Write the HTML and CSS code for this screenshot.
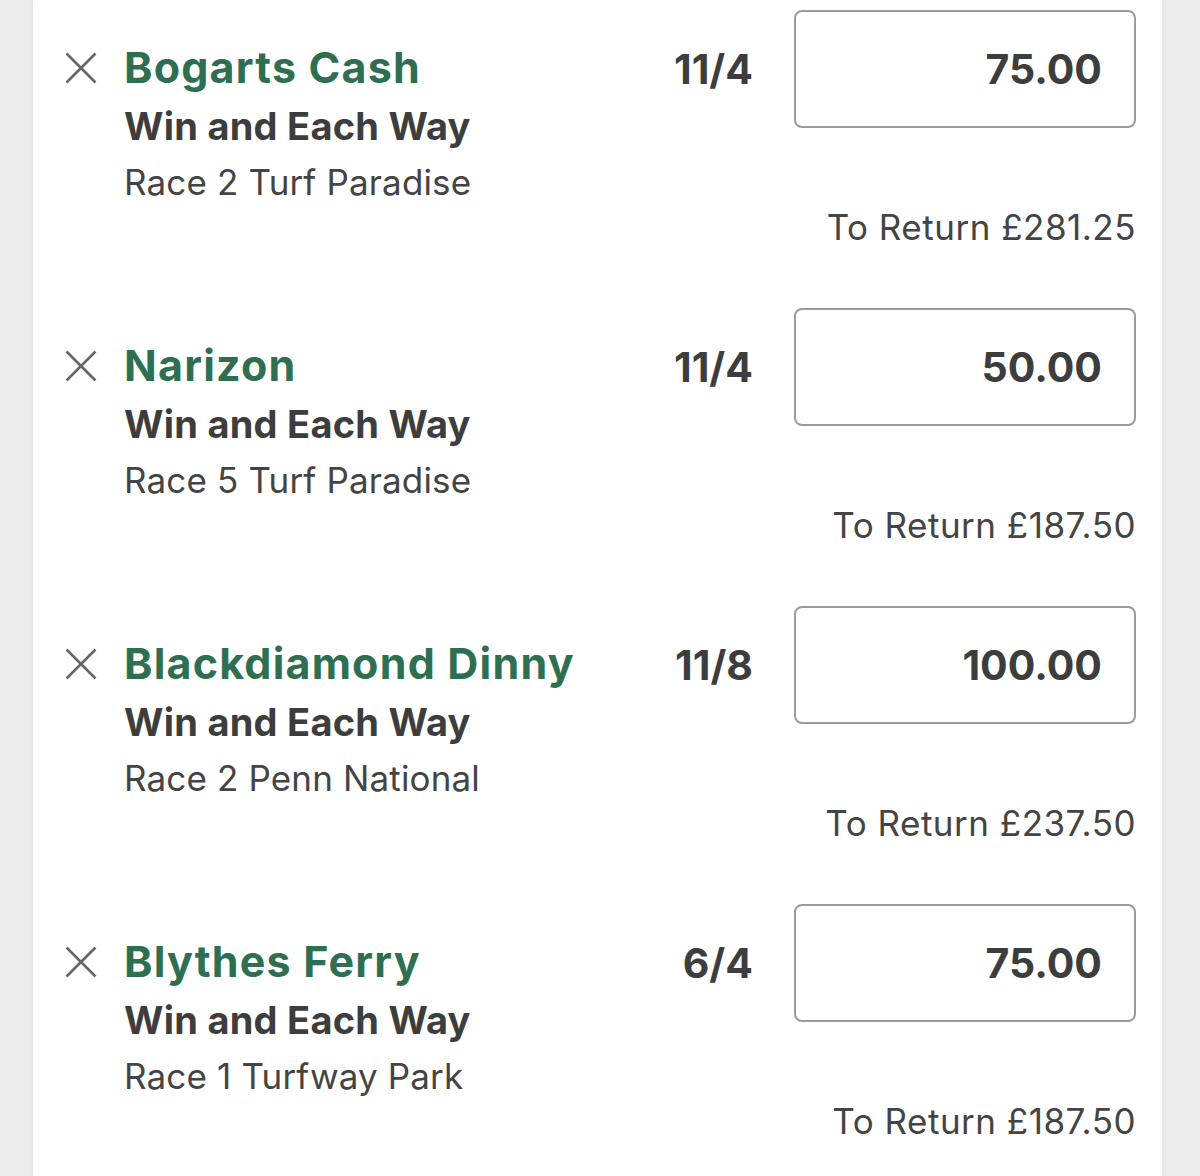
FILE: index.html
```html
<!DOCTYPE html>
<html lang="en">
<head>
    <meta charset="UTF-8">
    <meta name="viewport" content="width=device-width, initial-scale=1.0">
    <title>Bet Slip</title>
    <link rel="stylesheet" href="styles.css">
</head>
<body>
    <div class="slip">
        <div class="bet">
            <button class="remove" aria-label="Remove selection">
                <svg viewBox="0 0 32 32" width="32" height="32"><path d="M1.5 1.5L30.5 30.5M30.5 1.5L1.5 30.5"/></svg>
            </button>
            <div class="info">
                <div class="runner">Bogarts Cash</div>
                <div class="market">Win and Each Way</div>
                <div class="event">Race 2 Turf Paradise</div>
            </div>
            <div class="stake-col">
                <div class="stake-row">
                    <span class="odds">11/4</span>
                    <input class="stake" type="text" value="75.00">
                </div>
                <div class="returns">To Return £281.25</div>
            </div>
        </div>

        <div class="bet">
            <button class="remove" aria-label="Remove selection">
                <svg viewBox="0 0 32 32" width="32" height="32"><path d="M1.5 1.5L30.5 30.5M30.5 1.5L1.5 30.5"/></svg>
            </button>
            <div class="info">
                <div class="runner">Narizon</div>
                <div class="market">Win and Each Way</div>
                <div class="event">Race 5 Turf Paradise</div>
            </div>
            <div class="stake-col">
                <div class="stake-row">
                    <span class="odds">11/4</span>
                    <input class="stake" type="text" value="50.00">
                </div>
                <div class="returns">To Return £187.50</div>
            </div>
        </div>

        <div class="bet">
            <button class="remove" aria-label="Remove selection">
                <svg viewBox="0 0 32 32" width="32" height="32"><path d="M1.5 1.5L30.5 30.5M30.5 1.5L1.5 30.5"/></svg>
            </button>
            <div class="info">
                <div class="runner">Blackdiamond Dinny</div>
                <div class="market">Win and Each Way</div>
                <div class="event">Race 2 Penn National</div>
            </div>
            <div class="stake-col">
                <div class="stake-row">
                    <span class="odds">11/8</span>
                    <input class="stake" type="text" value="100.00">
                </div>
                <div class="returns">To Return £237.50</div>
            </div>
        </div>

        <div class="bet">
            <button class="remove" aria-label="Remove selection">
                <svg viewBox="0 0 32 32" width="32" height="32"><path d="M1.5 1.5L30.5 30.5M30.5 1.5L1.5 30.5"/></svg>
            </button>
            <div class="info">
                <div class="runner">Blythes Ferry</div>
                <div class="market">Win and Each Way</div>
                <div class="event">Race 1 Turfway Park</div>
            </div>
            <div class="stake-col">
                <div class="stake-row">
                    <span class="odds">6/4</span>
                    <input class="stake" type="text" value="75.00">
                </div>
                <div class="returns">To Return £187.50</div>
            </div>
        </div>
    </div>
</body>
</html>
```

FILE: styles.css
```css
body {
    font-family: Inter, "Liberation Sans", Arial, sans-serif;
    background-color: #ececec;
    margin: 0;
    padding: 0;
}
.slip {
    margin: 0 38px 0 33px;
    min-height: 1176px;
    background: #fff;
    box-shadow: 0 0 5px rgba(0,0,0,0.06);
}
.bet {
    display: flex;
    align-items: flex-start;
    padding: 10px 26px 51px 32px;
}
.remove {
    flex: none;
    width: 32px;
    height: 32px;
    margin-top: 42px;
    padding: 0;
    border: none;
    background: none;
    cursor: pointer;
}
.remove svg {
    display: block;
    fill: none;
    stroke: #666;
    stroke-width: 2.6;
}
.info {
    flex: 1;
    margin-top: 28px;
    margin-left: 27px;
}
.runner {
    font-size: 43px;
    line-height: 59px;
    font-weight: 700;
    letter-spacing: 1.2px;
    color: #2e6f51;
}
.market {
    font-size: 38px;
    line-height: 58px;
    font-weight: 700;
    letter-spacing: 0.25px;
    color: #3d3d3d;
}
.event {
    font-size: 35px;
    line-height: 54px;
    letter-spacing: 0.15px;
    color: #444;
}
.stake-col {
    display: flex;
    flex-direction: column;
    align-items: flex-end;
}
.stake-row {
    display: flex;
    align-items: center;
    gap: 41px;
}
.odds {
    font-size: 41px;
    font-weight: 700;
    color: #3d3d3d;
}
.stake {
    width: 342px;
    height: 118px;
    box-sizing: border-box;
    padding: 0 32px 0 10px;
    border: 2px solid #9b9b9b;
    border-radius: 8px;
    font-family: inherit;
    font-size: 41px;
    font-weight: 700;
    color: #3d3d3d;
    text-align: right;
    background: #fff;
}
.returns {
    margin-top: 79px;
    font-size: 35px;
    line-height: 40px;
    letter-spacing: 0.5px;
    color: #444;
}
```
